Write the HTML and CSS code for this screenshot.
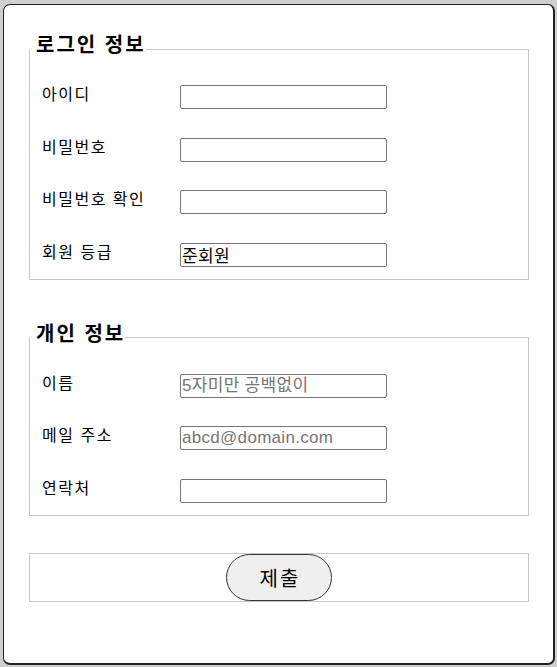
FILE: index.html
```html
<!DOCTYPE html>
<html lang="ko">
<head>
<meta charset="utf-8">
<title>회원 가입</title>
<link rel="stylesheet" href="styles.css">
</head>
<body>
<form class="card">
  <fieldset class="group">
    <legend class="group-title">로그인 정보</legend>
    <div class="rows">
      <label class="label" for="uid">아이디</label>
      <input class="field" id="uid" type="text">
      <label class="label" for="pw">비밀번호</label>
      <input class="field" id="pw" type="password">
      <label class="label" for="pw2">비밀번호 확인</label>
      <input class="field" id="pw2" type="password">
      <label class="label" for="grade">회원 등급</label>
      <input class="field" id="grade" type="text" value="준회원" readonly>
    </div>
  </fieldset>
  <fieldset class="group group-second">
    <legend class="group-title">개인 정보</legend>
    <div class="rows">
      <label class="label" for="name">이름</label>
      <input class="field" id="name" type="text" placeholder="5자미만 공백없이">
      <label class="label" for="mail">메일 주소</label>
      <input class="field" id="mail" type="text" placeholder="abcd@domain.com">
      <label class="label" for="tel">연락처</label>
      <input class="field" id="tel" type="text">
    </div>
  </fieldset>
  <fieldset class="group group-actions">
    <button class="submit" type="button">제출</button>
  </fieldset>
</form>
</body>
</html>
```

FILE: styles.css
```css
html, body {
  margin: 0;
  height: 100%;
}

body {
  box-sizing: border-box;
  padding: 4px 2px 2px 3px;
  background: #cfcfcf;
  font-family: "Noto Sans CJK KR", "Noto Sans", sans-serif;
  color: #000;
}

.card {
  box-sizing: border-box;
  height: 100%;
  margin: 0;
  padding: 27px 24px 0 25px;
  background: #fff;
  border-style: solid;
  border-color: #222;
  border-width: 1px 2px 2px 1px;
  border-radius: 7px;
}

.group {
  margin: 0;
  padding: 19px 0 12px;
  border: 1px solid #c8c8c8;
  min-width: 0;
}

.group-second {
  margin-top: 41px;
}

.group-actions {
  margin-top: 37px;
  padding: 0;
  display: flex;
  justify-content: center;
}

.group-title {
  padding: 2px 0 12px 6px;
  font-size: 20px;
  line-height: 20px;
  font-weight: 700;
  letter-spacing: 2px;
}

.rows {
  display: grid;
  grid-template-columns: 138px 207px;
  grid-auto-rows: 24px;
  row-gap: 28.5px;
  padding-left: 12px;
  align-items: start;
}

.label {
  font-size: 16px;
  line-height: 20px;
  margin-top: -2px;
  letter-spacing: 1.5px;
}

.field {
  box-sizing: border-box;
  width: 207px;
  height: 24px;
  margin: 0;
  padding: 0 1px;
  border: 1px solid #767676;
  border-radius: 2px;
  background: #fff;
  font-family: "Liberation Sans", "Noto Sans CJK KR", sans-serif;
  font-size: 17px;
  letter-spacing: 0.3px;
  color: #000;
}

.field::placeholder {
  color: #757575;
}

.submit {
  box-sizing: border-box;
  width: 106px;
  height: 47px;
  margin: 0;
  padding: 0 0 0 2px;
  border: 1px solid #333;
  border-radius: 24px;
  background: #efefef;
  font-family: "Noto Sans CJK KR", sans-serif;
  font-size: 20px;
  letter-spacing: 2px;
  color: #000;
}
```
